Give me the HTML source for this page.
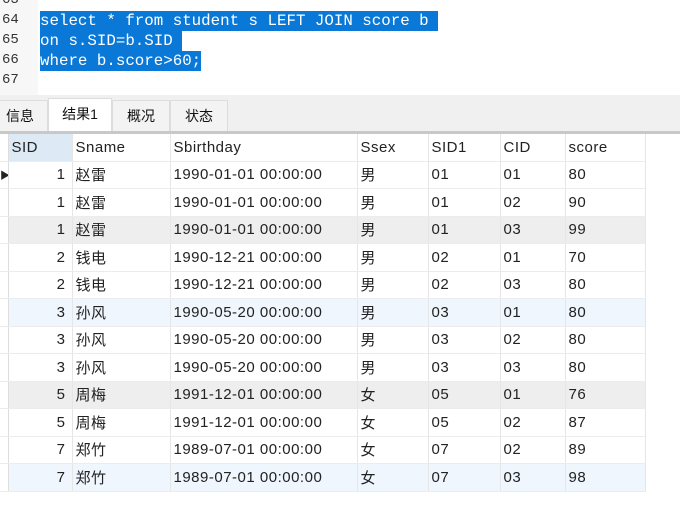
<!DOCTYPE html>
<html><head><meta charset="utf-8"><style>
*{margin:0;padding:0;box-sizing:border-box}
body{width:680px;height:506px;background:#fff;position:relative;overflow:hidden;font-family:"Liberation Sans","Noto Sans CJK SC",sans-serif}
.gut{position:absolute;left:0;top:0;width:38px;height:95px;background:#f7f7f7}
.ln{position:absolute;left:2px;font:14px "Liberation Mono",monospace;color:#333}
.code{position:absolute;left:40px;font:15.8px "Liberation Mono",monospace;color:#fff;background:#0a78d7;line-height:20px;height:20px;white-space:pre}
.bar{position:absolute;left:0;top:95px;width:680px;height:37px;background:#f0f0f0}
.tab{position:absolute;top:100px;height:31px;font-size:14px;line-height:30px;color:#111;text-align:center;border:1px solid #ddd;border-bottom:none;background:#f3f3f3}
.sep{position:absolute;left:0;top:131px;width:680px;height:3px;background:#c8c8c8}
table{position:absolute;left:0;top:134px;border-collapse:collapse;font-size:15px;letter-spacing:0.5px;color:#222;table-layout:fixed;width:645px}
td{height:27.5px;border-right:1px solid #e6e6e6;border-bottom:1px solid #ececec;padding-left:3px;white-space:nowrap;overflow:hidden}
tr.h td{height:27px}
td.i{padding:0;border-right:1px solid #ddd;font-size:10px}
td.r{text-align:right;padding-right:6px}
tr.g td{background:#eeeeee}
tr.b td{background:#f0f6fd}
tr td.i{background:#fff!important}
</style></head><body>
<div class="gut"></div>
<div class="ln" style="top:-8px">63</div>
<div class="ln" style="top:12px">64</div>
<div class="ln" style="top:32px">65</div>
<div class="ln" style="top:52px">66</div>
<div class="ln" style="top:72px">67</div>
<div class="code" style="top:11px">select * from student s LEFT JOIN score b </div>
<div class="code" style="top:31px">on s.SID=b.SID </div>
<div class="code" style="top:51px">where b.score&gt;60;</div>
<div class="bar"></div>
<div class="tab" style="left:-18px;width:66px;padding-left:10px">信息</div>
<div class="tab" style="left:48px;width:64px;background:#fff;top:98px;height:34px">结果1</div>
<div class="tab" style="left:112px;width:58px">概况</div>
<div class="tab" style="left:170px;width:58px">状态</div>
<div class="sep"></div>
<table>
<colgroup><col style="width:8px"><col style="width:64px"><col style="width:98px"><col style="width:187px"><col style="width:71px"><col style="width:72px"><col style="width:65px"><col style="width:80px"></colgroup>
<tr class="h"><td class="i"></td><td style="background:#dde9f5">SID</td><td>Sname</td><td>Sbirthday</td><td>Ssex</td><td>SID1</td><td>CID</td><td>score</td></tr>
<tr><td class="i">&#9654;</td><td class="r">1</td><td>赵雷</td><td>1990-01-01 00:00:00</td><td>男</td><td>01</td><td>01</td><td>80</td></tr>
<tr><td class="i"></td><td class="r">1</td><td>赵雷</td><td>1990-01-01 00:00:00</td><td>男</td><td>01</td><td>02</td><td>90</td></tr>
<tr class="g"><td class="i"></td><td class="r">1</td><td>赵雷</td><td>1990-01-01 00:00:00</td><td>男</td><td>01</td><td>03</td><td>99</td></tr>
<tr><td class="i"></td><td class="r">2</td><td>钱电</td><td>1990-12-21 00:00:00</td><td>男</td><td>02</td><td>01</td><td>70</td></tr>
<tr><td class="i"></td><td class="r">2</td><td>钱电</td><td>1990-12-21 00:00:00</td><td>男</td><td>02</td><td>03</td><td>80</td></tr>
<tr class="b"><td class="i"></td><td class="r">3</td><td>孙风</td><td>1990-05-20 00:00:00</td><td>男</td><td>03</td><td>01</td><td>80</td></tr>
<tr><td class="i"></td><td class="r">3</td><td>孙风</td><td>1990-05-20 00:00:00</td><td>男</td><td>03</td><td>02</td><td>80</td></tr>
<tr><td class="i"></td><td class="r">3</td><td>孙风</td><td>1990-05-20 00:00:00</td><td>男</td><td>03</td><td>03</td><td>80</td></tr>
<tr class="g"><td class="i"></td><td class="r">5</td><td>周梅</td><td>1991-12-01 00:00:00</td><td>女</td><td>05</td><td>01</td><td>76</td></tr>
<tr><td class="i"></td><td class="r">5</td><td>周梅</td><td>1991-12-01 00:00:00</td><td>女</td><td>05</td><td>02</td><td>87</td></tr>
<tr><td class="i"></td><td class="r">7</td><td>郑竹</td><td>1989-07-01 00:00:00</td><td>女</td><td>07</td><td>02</td><td>89</td></tr>
<tr class="b"><td class="i"></td><td class="r">7</td><td>郑竹</td><td>1989-07-01 00:00:00</td><td>女</td><td>07</td><td>03</td><td>98</td></tr>
</table>
</body></html>
